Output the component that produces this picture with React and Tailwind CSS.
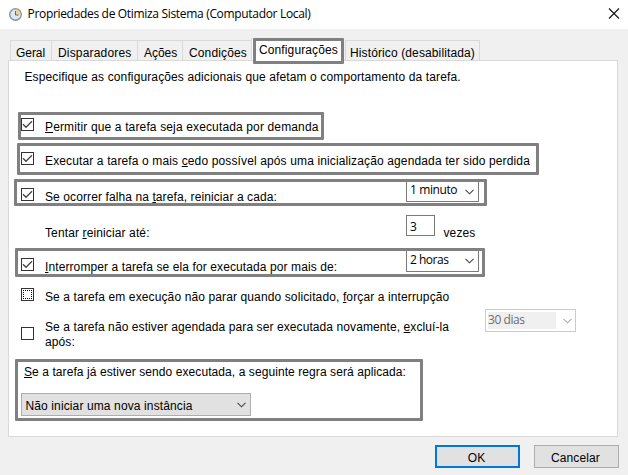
const segoe = "font-['Open_Sans','Noto_Sans',sans-serif]";

function Chevron({ className = "", color = "#444" }) {
  return (
    <svg className={`block h-[6px] w-[9px] shrink-0 ${className}`} viewBox="0 0 9 6" fill="none" stroke={color} strokeWidth="1.1">
      <path d="M0.5 0.8 4.5 4.8 8.5 0.8" />
    </svg>
  );
}

function Check({ checked = false, focused = false, className = "" }) {
  return (
    <span className={`block h-[13px] w-[13px] shrink-0 border border-[#333] bg-white ${className}`}>
      {checked && (
        <svg className="block h-[11px] w-[11px]" viewBox="0 0 11 11" fill="none" stroke="#444" strokeWidth="1.3">
          <path d="M1 5.3 4 8.3 10 2.3" />
        </svg>
      )}
      {focused && (
        <svg className="block h-[11px] w-[11px]" viewBox="0 0 11 11" fill="none" stroke="#000" strokeDasharray="1 1" shapeRendering="crispEdges">
          <path d="M1 1.5H10M1 9.5H10M1.5 1V10M9.5 1V10" />
        </svg>
      )}
    </span>
  );
}

function Key({ children }) {
  return <span className="underline decoration-1 underline-offset-1">{children}</span>;
}

function Frame({ className, children }) {
  return <div className={`flex items-start rounded-[1px] border-3 border-[#808080] ${className}`}>{children}</div>;
}

function Tab({ className, children }) {
  return <div className={`h-5 shrink-0 border-t border-r border-[#d9d9d9] pt-[4px] leading-4 ${className}`}>{children}</div>;
}

export default function App() {
  return (
    <div className="h-[475px] w-[628px] overflow-hidden bg-[#f0f0f0] font-['Liberation_Sans',Arial,sans-serif] text-[12px] leading-4 tracking-[0.12px] whitespace-nowrap text-black">
      <header className="flex h-[29px] items-start bg-white">
        <svg className="mt-[8px] ml-[9px] block h-[13px] w-[13px] shrink-0" viewBox="0 0 13 13">
          <circle cx="6.5" cy="6.5" r="5.8" fill="#dbe8f3" stroke="#929292" strokeWidth="1.4" />
          <path d="M6.5 6.5V1.5A5 5 0 0 1 11.5 6.5Z" fill="#f5cf87" />
          <path d="M6.5 3V7H9.6" fill="none" stroke="#54687c" strokeWidth="1" />
        </svg>
        <h1 className={`mt-[6px] ml-[5.5px] grow text-[12px] tracking-[-0.32px] ${segoe}`}>Propriedades de Otimiza Sistema (Computador Local)</h1>
        <svg className="mt-[8px] mr-[8px] block h-[11px] w-[12px]" viewBox="0 0 12 11" fill="none" stroke="#111" strokeWidth="1.1">
          <path d="M1 0.5 11 10.5M11 0.5 1 10.5" />
        </svg>
      </header>

      <nav className="flex h-[31px] items-end pl-[10px]">
        <Tab className="w-[42px] border-l pl-[5px] tracking-[-0.05px]">Geral</Tab>
        <Tab className="w-[86px] pl-[6px] tracking-[0.18px]">Disparadores</Tab>
        <Tab className="w-[45px] pl-[6px] tracking-[-0.05px]">Ações</Tab>
        <Tab className="w-[68px] border-r-0 pl-[6px] tracking-[0.14px]">Condições</Tab>
        <div className="relative -mb-[4px] flex h-[26px] w-[94px] shrink-0">
          <div className="h-[22px] w-[2px] border-t border-l border-[#d9d9d9] bg-white" />
          <Frame className="h-[26px] w-[91px] bg-white pt-px pl-[3px]">Configurações</Frame>
        </div>
        <Tab className="w-[135px] border-l pl-[4px]">Histórico (desabilitada)</Tab>
      </nav>

      <main className="ml-[8px] h-[377px] w-[610px] border border-[#d9d9d9] bg-white">
        <p className="pt-[8px] pl-[15.5px]">Especifique as configurações adicionais que afetam o comportamento da tarefa.</p>

        <Frame className="mt-[27px] ml-[9px] h-[28px] w-[306px]">
          <Check checked className="mt-[3px]" />
          <span className="mt-[4px] ml-[11px] tracking-[0.14px]"><Key>P</Key>ermitir que a tarefa seja executada por demanda</span>
        </Frame>
        <Frame className="mt-[3px] ml-[8px] h-[32px] w-[522px]">
          <Check checked className="mt-[6px] ml-px" />
          <span className="mt-[7px] ml-[11px] tracking-[0.13px]">Executar a tarefa o mais <Key>c</Key>edo possível após uma inicialização agendada ter sido perdida</span>
        </Frame>
        <Frame className="mt-[4px] ml-[5px] h-[27px] w-[473px]">
          <Check checked className="mt-[6px] ml-[4px]" />
          <span className="mt-[7px] ml-[11px] grow tracking-[0.1px]">Se ocorrer falha na <Key>t</Key>arefa, reiniciar a cada:</span>
          <div className={`mr-[5px] flex h-[20px] w-[73px] items-start border border-t-0 border-[#7a7a7a] pl-[3px] ${segoe}`}>
            <span className="grow tracking-[-0.4px]">1 minuto</span>
            <Chevron className="mt-[7px] mr-[4px]" />
          </div>
        </Frame>

        <div className="flex h-[42px] items-start pl-[36px]">
          <span className="mt-[19px] w-[361px]">Tentar <Key>r</Key>einiciar até:</span>
          <div className={`mt-[9px] h-[21px] w-[29px] border border-[#7a7a7a] pt-[3px] pl-[3px] ${segoe}`}>3</div>
          <span className="mt-[19px] ml-[8.5px]">vezes</span>
        </div>

        <Frame className="ml-[6px] h-[29px] w-[470px]">
          <Check checked className="mt-[7px] ml-[3px]" />
          <span className="mt-[8px] ml-[11px] grow tracking-[0.1px]"><Key>I</Key>nterromper a tarefa se ela for executada por mais de:</span>
          <div className={`mr-[3px] flex h-[21px] w-[73px] items-start border border-t-0 border-[#7a7a7a] pl-[3px] ${segoe}`}>
            <span className="mt-px grow tracking-[-0.5px]">2 horas</span>
            <Chevron className="mt-[7px] mr-[4px]" />
          </div>
        </Frame>

        <div className="flex h-[32px] items-start pl-[12px]">
          <Check focused className="mt-[11px]" />
          <span className="mt-[12px] ml-[11px]">Se a tarefa em execução não parar quando solicitado, <Key>f</Key>orçar a interrupção</span>
        </div>

        <div className="flex h-[50px] items-start pl-[12px]">
          <Check className="mt-[18px]" />
          <span className="mt-[11px] ml-[11px] w-[440px] leading-[15px] tracking-[0.09px]">
            Se a tarefa não estiver agendada para ser executada novamente, <Key>e</Key>xcluí-la<br />após:
          </span>
          <div className={`flex h-[23px] w-[91px] items-start border border-[#ccc] pt-[2px] pl-[2px] text-[#6d6d6d] ${segoe}`}>
            <span className="h-[17px] w-[68px] bg-[#f0f0f0] leading-4 tracking-[-0.45px]">30 dias</span>
            <Chevron className="mt-[6px] ml-[7px]" color="#aaa" />
          </div>
        </div>

        <Frame className="ml-[6px] h-[62px] w-[408px] flex-col">
          <p className="mt-[2px] ml-[6px] tracking-[0.08px]"><Key>S</Key>e a tarefa já estiver sendo executada, a seguinte regra será aplicada:</p>
          <div className="mt-[13px] ml-[3px] flex h-[23px] w-[230px] items-start border border-[#adadad] bg-[#e1e1e1] pl-[3.5px]">
            <span className="mt-[4px] grow">Não iniciar uma nova instância</span>
            <Chevron className="mt-[8px] mr-[4px]" />
          </div>
        </Frame>
      </main>

      <footer className="flex justify-end gap-[14px] pt-[8px] pr-[9px]">
        <button className="h-[23px] w-[85px] border-2 border-[#0078d7] bg-[#e1e1e1] pt-[3px] pr-[2px]">OK</button>
        <button className="h-[23px] w-[85px] border border-[#adadad] bg-[#e1e1e1] pt-[3px] pr-[2px]">Cancelar</button>
      </footer>
    </div>
  );
}
